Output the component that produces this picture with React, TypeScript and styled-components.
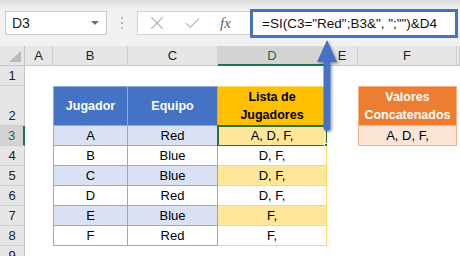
import React from "react";
import styled, { createGlobalStyle } from "styled-components";
import { X, Check } from "lucide-react";

const GlobalStyle = createGlobalStyle`
  html, body {
    margin: 0;
    padding: 0;
    background: #ffffff;
  }
`;

const Page = styled.div`
  position: relative;
  width: 460px;
  height: 256px;
  overflow: hidden;
  background: #ffffff;
  font-family: "Liberation Sans", Arial, sans-serif;
  color: #000;
`;

const Toolbar = styled.div`
  height: 46px;
  display: flex;
  align-items: center;
  padding-left: 5px;
  background: linear-gradient(#dcdcdc, #f1f1f1 9px, #f1f1f1);
  box-sizing: border-box;
`;

const NameBox = styled.div`
  width: 102px;
  height: 24px;
  box-sizing: border-box;
  border: 1px solid #c8c8c8;
  background: #fff;
  display: flex;
  align-items: center;
  justify-content: space-between;
  padding: 0 7px 0 6px;
  font-size: 14px;
  color: #222;
`;

const DropArrow = styled.span`
  width: 0;
  height: 0;
  border-left: 4px solid transparent;
  border-right: 4px solid transparent;
  border-top: 4px solid #707070;
`;

const Grip = styled.div`
  margin-left: 14px;
  width: 2px;
  display: flex;
  flex-direction: column;
  gap: 3px;
  span {
    width: 2px;
    height: 2px;
    background: #b8b8b8;
  }
`;

const FuncBox = styled.div`
  margin-left: 14px;
  width: 113px;
  height: 24px;
  box-sizing: border-box;
  border: 1px solid #d2d2d2;
  border-right: none;
  background: #fff;
  display: flex;
  align-items: center;
  padding-left: 8px;
  gap: 15px;
  color: #b4b4b4;
`;

const Fx = styled.span`
  font-family: "Liberation Serif", serif;
  font-style: italic;
  font-size: 15px;
  color: #606060;
  margin-left: 3px;
`;

const FormulaInput = styled.div`
  width: 208px;
  height: 29px;
  box-sizing: border-box;
  border: 3px solid #4472c4;
  background: #fff;
  display: flex;
  align-items: center;
  padding-left: 9px;
  font-size: 13.5px;
  color: #111;
  white-space: pre;
`;

const Sheet = styled.div`
  display: grid;
  grid-template-columns: 25px 28px 75px 90px 109px 31px 99px 1fr;
  grid-template-rows: 20px 20px 40px repeat(7, 20px);
`;

const Corner = styled.div`
  position: relative;
  background: #e6e6e6;
  border-right: 1px solid #c6c6c6;
  border-bottom: 1px solid #c6c6c6;
  box-sizing: border-box;
  &::after {
    content: "";
    position: absolute;
    right: 3px;
    bottom: 3px;
    width: 0;
    height: 0;
    border-left: 12px solid transparent;
    border-bottom: 11px solid #b9b9b9;
  }
`;

const ColHead = styled.div<{ $active?: boolean }>`
  background: ${(p) => (p.$active ? "#d3d3d3" : "#e6e6e6")};
  border-right: 1px solid #cfcfcf;
  border-bottom: ${(p) => (p.$active ? "2px solid #217346" : "1px solid #c6c6c6")};
  box-sizing: border-box;
  display: flex;
  align-items: center;
  justify-content: center;
  font-size: 13px;
  color: ${(p) => (p.$active ? "#1e6b41" : "#222")};
`;

const RowHead = styled.div<{ $active?: boolean }>`
  background: ${(p) => (p.$active ? "#d3d3d3" : "#e6e6e6")};
  border-bottom: 1px solid #cfcfcf;
  border-right: ${(p) => (p.$active ? "2px solid #217346" : "1px solid #c6c6c6")};
  box-sizing: border-box;
  display: flex;
  align-items: flex-end;
  justify-content: center;
  padding-bottom: 2px;
  font-size: 13px;
  color: ${(p) => (p.$active ? "#1e6b41" : "#222")};
`;

type CellProps = {
  $bg?: string;
  $line?: string;
  $ink?: string;
  $bold?: boolean;
  $top?: boolean;
  $left?: boolean;
  $selected?: boolean;
};

const Cell = styled.div<CellProps>`
  position: relative;
  box-sizing: border-box;
  background: ${(p) => p.$bg || "#fff"};
  border-right: ${(p) => (p.$line ? `1px solid ${p.$line}` : "none")};
  border-bottom: ${(p) => (p.$line ? `1px solid ${p.$line}` : "none")};
  border-top: ${(p) => (p.$top && p.$line ? `1px solid ${p.$line}` : "none")};
  border-left: ${(p) => (p.$left && p.$line ? `1px solid ${p.$line}` : "none")};
  display: flex;
  align-items: center;
  justify-content: center;
  text-align: center;
  font-size: ${(p) => (p.$bold ? "12.5px" : "13px")};
  font-weight: ${(p) => (p.$bold ? 700 : 400)};
  line-height: 18px;
  color: ${(p) => p.$ink || "#000"};
  ${(p) =>
    p.$selected &&
    `
    &::before {
      content: "";
      position: absolute;
      left: -1px;
      top: -1px;
      right: -2px;
      bottom: -2px;
      border: 2px solid #217346;
      pointer-events: none;
    }
    &::after {
      content: "";
      position: absolute;
      right: -5px;
      bottom: -5px;
      width: 5px;
      height: 5px;
      background: #217346;
      border: 1px solid #fff;
    }
  `}
`;

const ArrowLayer = styled.svg`
  position: absolute;
  left: 311px;
  top: 38px;
  overflow: visible;
`;

const BLUE = "#4472c4";
const BLUE_LIGHT = "#d9e1f2";
const BLUE_LINE = "#8ea9db";
const GOLD = "#ffc000";
const GOLD_LIGHT = "#ffe699";
const GOLD_LINE = "#ffd966";
const ORANGE = "#ed7d31";
const PEACH = "#fce4d6";
const ORANGE_LINE = "#f4b084";

const columns = ["A", "B", "C", "D", "E", "F", ""];

const rows: [string, string, string][] = [
  ["A", "Red", "A, D, F,"],
  ["B", "Blue", "D, F,"],
  ["C", "Blue", "D, F,"],
  ["D", "Red", "D, F,"],
  ["E", "Blue", "F,"],
  ["F", "Red", "F,"],
];

const App: React.FC = () => {
  return (
    <Page>
      <GlobalStyle />
      <Toolbar>
        <NameBox>
          D3
          <DropArrow />
        </NameBox>
        <Grip>
          <span />
          <span />
          <span />
        </Grip>
        <FuncBox>
          <X size={22} strokeWidth={1.2} />
          <Check size={19} strokeWidth={1.4} />
          <Fx>fx</Fx>
        </FuncBox>
        <FormulaInput>{'=SI(C3="Red";B3&", ";"")&D4'}</FormulaInput>
      </Toolbar>

      <Sheet>
        <Corner />
        {columns.map((c, i) => (
          <ColHead key={i} $active={c === "D"}>
            {c}
          </ColHead>
        ))}

        {/* row 1 */}
        <RowHead>1</RowHead>
        {columns.map((_, i) => (
          <Cell key={i} />
        ))}

        {/* row 2: headers */}
        <RowHead>2</RowHead>
        <Cell />
        <Cell $bg={BLUE} $line={BLUE_LINE} $ink="#fff" $bold $top $left>
          Jugador
        </Cell>
        <Cell $bg={BLUE} $line={BLUE_LINE} $ink="#fff" $bold $top>
          Equipo
        </Cell>
        <Cell $bg={GOLD} $line={GOLD_LINE} $bold $top>
          Lista de
          <br />
          Jugadores
        </Cell>
        <Cell />
        <Cell $bg={ORANGE} $line={ORANGE_LINE} $ink="#fff" $bold $top $left>
          Valores
          <br />
          Concatenados
        </Cell>
        <Cell />

        {rows.map(([player, team, list], i) => {
          const odd = i % 2 === 0;
          return (
            <React.Fragment key={player}>
              <RowHead $active={i === 0}>{i + 3}</RowHead>
              <Cell />
              <Cell $bg={odd ? BLUE_LIGHT : "#fff"} $line={BLUE_LINE} $left>
                {player}
              </Cell>
              <Cell $bg={odd ? BLUE_LIGHT : "#fff"} $line={BLUE_LINE}>
                {team}
              </Cell>
              <Cell $bg={odd ? GOLD_LIGHT : "#fff"} $line={GOLD_LINE} $selected={i === 0}>
                {list}
              </Cell>
              <Cell />
              {i === 0 ? (
                <Cell $bg={PEACH} $line={ORANGE_LINE} $left>
                  A, D, F,
                </Cell>
              ) : (
                <Cell />
              )}
              <Cell />
            </React.Fragment>
          );
        })}

        <RowHead>9</RowHead>
      </Sheet>

      <ArrowLayer width="32" height="100" viewBox="0 0 32 100">
        <defs>
          <filter id="arrowShade" x="-50%" y="-10%" width="200%" height="130%">
            <feDropShadow dx="1.5" dy="1.5" stdDeviation="1.2" floodColor="#000" floodOpacity="0.35" />
          </filter>
        </defs>
        <g filter="url(#arrowShade)" fill={BLUE} stroke={BLUE}>
          <line x1="16" y1="22" x2="16" y2="89.5" strokeWidth="7" strokeLinecap="round" />
          <path d="M16 2 L26 24 L6 24 Z" stroke="none" />
        </g>
      </ArrowLayer>
    </Page>
  );
};

export default App;
